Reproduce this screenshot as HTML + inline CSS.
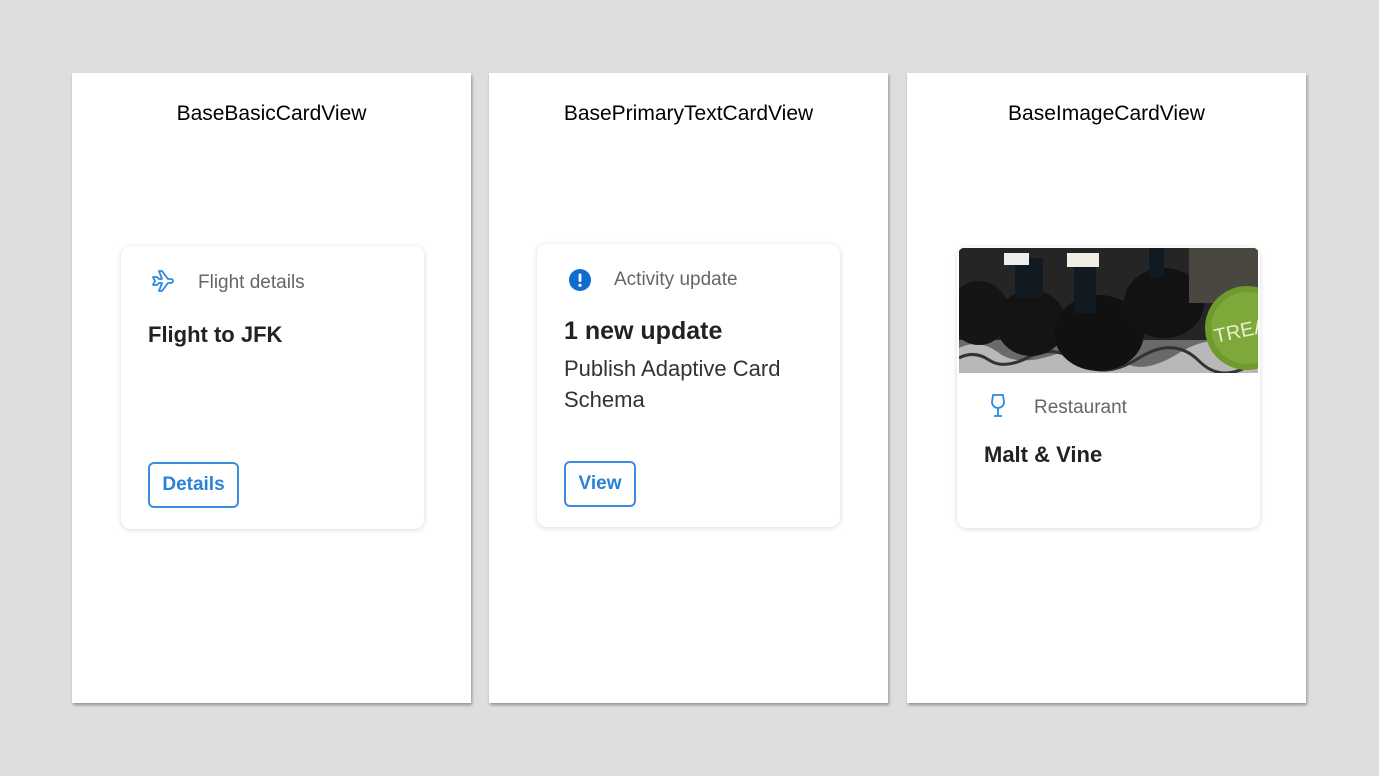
<!DOCTYPE html>
<html><head><meta charset="utf-8"><style>
*{margin:0;padding:0;box-sizing:border-box}
body{width:1379px;height:776px;background:#dedede;position:relative;overflow:hidden;font-family:"Liberation Sans",sans-serif}
.panel{position:absolute;top:73px;width:399px;height:630px;background:#fff;box-shadow:1px 2px 3px rgba(0,0,0,.35)}
.title{position:absolute;top:29px;width:100%;text-align:center;font-size:21px;color:#000}
.card{position:absolute;width:303px;background:#fff;border-radius:10px;box-shadow:0 1px 6px rgba(0,0,0,.15);overflow:hidden}
.hdr{position:absolute;font-size:19px;color:#666}
.big{position:absolute;font-size:22px;font-weight:600;color:#222}
.btn{position:absolute;border:2px solid #3a8ee0;border-radius:6px;color:#2a82d8;font-weight:600;font-size:19px;text-align:center}
.icon{position:absolute}
</style></head><body>

<div class="panel" style="left:72px"><div class="title">BaseBasicCardView</div>
<div class="card" style="left:49px;top:173px;height:283px">
<svg class="icon" style="left:29px;top:22px" width="26" height="26" viewBox="0 0 26 26"><path d="M3 9h4l2 2h3L9 3h3l6 8h3a2 2 0 0 1 0 4h-3l-6 8H9l3-8H9l-2 2H3l2-4z" fill="none" stroke="#2a8ae0" stroke-width="1.8" stroke-linejoin="round"/></svg>
<div class="hdr" style="left:77px;top:26px">Flight details</div>
<div class="big" style="left:27px;top:76px">Flight to JFK</div>
<div class="btn" style="left:27px;top:216px;width:91px;height:46px;line-height:42px">Details</div>
</div></div>

<div class="panel" style="left:489px"><div class="title">BasePrimaryTextCardView</div>
<div class="card" style="left:48px;top:171px;height:283px">
<svg class="icon" style="left:31px;top:24px" width="24" height="24" viewBox="0 0 24 24"><circle cx="12" cy="12" r="11" fill="#0f6cd0"/><rect x="10.6" y="5.5" width="2.8" height="8.5" rx="1.2" fill="#fff"/><circle cx="12" cy="17.3" r="1.6" fill="#fff"/></svg>
<div class="hdr" style="left:77px;top:25px">Activity update</div>
<div class="big" style="left:27px;top:73px;font-size:25px">1 new update</div>
<div style="position:absolute;left:27px;top:109px;font-size:22px;color:#333;line-height:31px;width:250px">Publish Adaptive Card Schema</div>
<div class="btn" style="left:27px;top:217px;width:72px;height:46px;line-height:42px">View</div>
</div></div>

<div class="panel" style="left:907px"><div class="title">BaseImageCardView</div>
<div class="card" style="left:50px;top:174px;height:281px">
<svg style="position:absolute;left:2px;top:1px" width="299" height="125" viewBox="0 0 299 125">
<rect width="299" height="125" fill="#262525"/>
<rect y="92" width="299" height="33" fill="#6a6a6a"/>
<path d="M0 100 q20-10 40 5 t60 0 t60 5 t60-5 t80 0 V125H0z" fill="#b8b8b8"/>
<path d="M0 110 q15-8 30 2 t40-3 t50 5 t60-4 t60 3 t60-2" stroke="#333" stroke-width="3" fill="none"/>
<ellipse cx="20" cy="65" rx="30" ry="32" fill="#151515"/>
<ellipse cx="72" cy="75" rx="35" ry="33" fill="#141414"/><rect x="56" y="10" width="28" height="40" fill="#101a20"/><rect x="45" y="5" width="25" height="12" fill="#eee"/>
<ellipse cx="140" cy="85" rx="45" ry="38" fill="#111"/><rect x="115" y="15" width="22" height="50" fill="#0f1a22"/><rect x="108" y="5" width="32" height="14" fill="#f0ede5"/>
<ellipse cx="205" cy="55" rx="40" ry="35" fill="#121212"/><rect x="190" y="0" width="15" height="30" fill="#0f1a22"/>
<rect x="230" y="0" width="69" height="55" fill="#4a4740"/>
<circle cx="288" cy="80" r="42" fill="#6f9a2e"/><circle cx="288" cy="80" r="36" fill="#7ea83a"/>
<text x="255" y="92" font-size="20" fill="#e8f0d0" font-family="Liberation Sans" transform="rotate(-12 270 85)">TREATS</text>
</svg>
<svg class="icon" style="left:33px;top:146px" width="16" height="26" viewBox="0 0 16 26"><path d="M3 2h10l1 7a6 6 0 0 1-12 0z M8 15v8 M4 23h8" fill="none" stroke="#2a8ae0" stroke-width="1.8" stroke-linejoin="round"/></svg>
<div class="hdr" style="left:77px;top:150px">Restaurant</div>
<div class="big" style="left:27px;top:195px">Malt &amp; Vine</div>
</div></div>

</body></html>
